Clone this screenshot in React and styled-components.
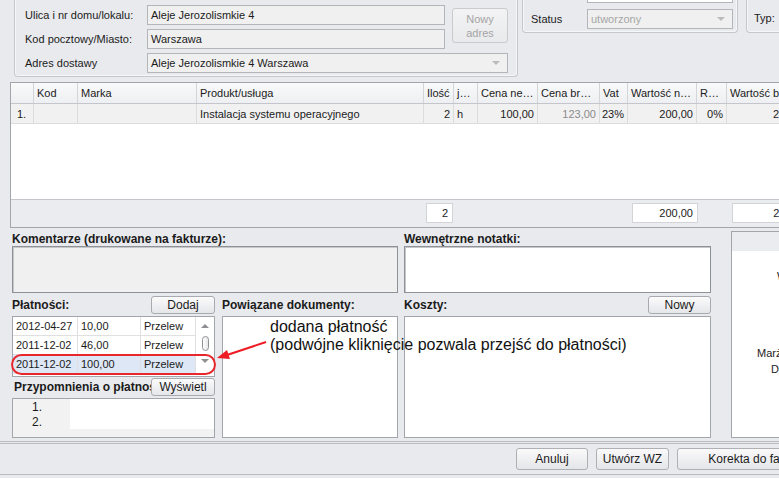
import React from "react";
import styled, { createGlobalStyle } from "styled-components";

const GlobalStyle = createGlobalStyle`
  html, body { margin: 0; padding: 0; background: #e9eaee; }
  body { font-family: "Liberation Sans", Arial, sans-serif; font-size: 11px; color: #1b1b1b; }
  * { box-sizing: border-box; }
`;

const Viewport = styled.div`
  width: 779px;
  height: 478px;
  overflow: hidden;
  background: #e9eaee;
`;

const Form = styled.div`
  width: 880px;
  display: flex;
  flex-direction: column;
`;

/* ---------- top ---------- */
const TopRow = styled.div`
  display: flex;
  align-items: flex-start;
  height: 80px;
`;

const GroupBox = styled.div`
  border: 1px solid #c5c7cd;
  border-top: none;
  border-radius: 0 0 4px 4px;
  box-shadow: inset 1px 0 0 #f6f7f9, inset -1px -1px 0 #f6f7f9;
`;

const AddressGroup = styled(GroupBox)`
  margin-left: 14px;
  width: 504px;
  height: 77px;
  padding: 5px 9px 0 10px;
  display: grid;
  grid-template-columns: 115px 298px 56px;
  grid-template-rows: 20px 20px 20px;
  column-gap: 7px;
  row-gap: 4px;
`;

const StatusGroup = styled(GroupBox)`
  margin-left: 4px;
  width: 216px;
  height: 33px;
  padding: 0 4px 0 8px;
  display: grid;
  grid-template-columns: 56px 1fr;
  grid-template-rows: 3px 20px;
  row-gap: 6px;
`;

const TypGroup = styled(GroupBox)`
  margin-left: 8px;
  flex: 1;
  height: 33px;
  padding: 3px 0 0 7px;
  display: flex;
  align-items: center;
  border-right: none;
`;

const FieldLabel = styled.div`
  display: flex;
  align-items: center;
  white-space: nowrap;
`;

const Field = styled.div`
  display: flex;
  align-items: center;
  justify-content: space-between;
  height: 20px;
  padding: 0 3px 0 3px;
  background: ${(p) => (p.$white ? "#ffffff" : "#f0f0f0")};
  border: 1px solid #b3b5ba;
  color: ${(p) => (p.$muted ? "#a6a6a6" : "#1b1b1b")};
  grid-column: ${(p) => p.$span || "auto"};
  white-space: nowrap;
`;

const StubField = styled.div`
  grid-column: 2;
  background: #ffffff;
  border: 1px solid #b3b5ba;
  border-top: none;
`;

const DropArrow = styled.span`
  width: 0;
  height: 0;
  margin-right: 4px;
  border-left: 4px solid transparent;
  border-right: 4px solid transparent;
  border-top: 4px solid #b9bbbf;
`;

const NewAddressButton = styled.div`
  grid-column: 3;
  grid-row: 1 / 3;
  align-self: start;
  margin-top: 3px;
  height: 35px;
  display: flex;
  align-items: center;
  justify-content: center;
  text-align: center;
  line-height: 14px;
  color: #a4a4a6;
  border: 1px solid #cacbcf;
  border-radius: 3px;
  background: linear-gradient(#f3f3f4, #e9eaec);
`;

/* ---------- data grid ---------- */
const COLS = "23px 44px 119px 227px 30px 24px 60px 62px 28px 69px 30px 1fr";

const DataGrid = styled.div`
  margin: 2px 0 0 10px;
  width: 860px;
  height: 146px;
  border: 1px solid #a2a5ac;
  background: #ffffff;
  display: flex;
  flex-direction: column;
`;

const HeaderRow = styled.div`
  display: grid;
  grid-template-columns: ${COLS};
  height: 21px;
  background: linear-gradient(#f9f9fa, #eeeff2);
  border-bottom: 1px solid #c4c6cb;
`;

const HeaderCell = styled.div`
  display: flex;
  align-items: center;
  padding: 0 3px;
  border-right: 1px solid #d3d5d9;
  white-space: nowrap;
  overflow: hidden;
`;

const DataRow = styled.div`
  display: grid;
  grid-template-columns: ${COLS};
  height: 20px;
  background: #f1f1f2;
`;

const DataCell = styled.div`
  display: flex;
  align-items: center;
  justify-content: ${(p) => (p.$right ? "flex-end" : "flex-start")};
  padding: 0 3px 0 ${(p) => p.$pl || 3}px;
  border-right: 1px solid #dcdcdc;
  border-bottom: 1px solid #dcdcdc;
  color: ${(p) => (p.$muted ? "#8a8a8a" : "#1b1b1b")};
  white-space: nowrap;
  overflow: hidden;
`;

const GridBody = styled.div`
  flex: 1;
`;

const FooterRow = styled.div`
  display: grid;
  grid-template-columns: ${COLS};
  height: 28px;
  padding-top: 3px;
  background: #ebecef;
  border-top: 1px solid #c4c6cb;
`;

const FooterBox = styled.div`
  grid-column: ${(p) => p.$col};
  margin-left: ${(p) => p.$ml}px;
  width: ${(p) => (p.$w ? `${p.$w}px` : "auto")};
  height: 20px;
  display: flex;
  align-items: center;
  justify-content: flex-end;
  padding-right: 4px;
  background: #ffffff;
  border: 1px solid #d2d4d8;
  white-space: nowrap;
`;

/* ---------- bottom section ---------- */
const Lower = styled.div`
  position: relative;
  margin-top: 3px;
  padding: 0 10px 0 12px;
  display: grid;
  grid-template-columns: 203px 7px 176px 6px 307px 20px 1fr;
  grid-template-rows: 15px 47px 23px 122px;
`;

const SectionTitle = styled.div`
  grid-column: ${(p) => p.$col};
  display: flex;
  align-items: center;
  font-weight: bold;
  font-size: 12px;
  white-space: nowrap;
`;

const TextArea = styled.div`
  grid-column: ${(p) => p.$col};
  background: ${(p) => (p.$white ? "#ffffff" : "#f0f0f0")};
  border: 1px solid #8e9197;
  box-shadow: inset 1px 1px 0 #c6c7c9;
`;

const Toolbar = styled.div`
  grid-column: ${(p) => p.$col};
  display: flex;
  align-items: center;
  justify-content: space-between;
`;

const ToolTitle = styled.div`
  font-weight: bold;
  font-size: 12px;
  white-space: nowrap;
  overflow: hidden;
  min-width: 0;
  flex: 1;
  padding-left: ${(p) => p.$pl || 0}px;
`;

const SmallButton = styled.div`
  flex: none;
  width: ${(p) => p.$w || 64}px;
  height: 18px;
  display: flex;
  align-items: center;
  justify-content: center;
  font-size: 12px;
  border: 1px solid #a8aab0;
  border-radius: 3px;
  background: linear-gradient(#fbfbfc, #e5e6e9);
`;

const ListBox = styled.div`
  grid-column: ${(p) => p.$col};
  background: #ffffff;
  border: 1px solid #a2a5ac;
`;

const LeftStack = styled.div`
  grid-column: 1;
  position: relative;
  display: flex;
  flex-direction: column;
`;

const PayList = styled.div`
  height: 61px;
  background: #ffffff;
  border: 1px solid #a2a5ac;
  display: flex;
`;

const PayRows = styled.div`
  display: grid;
  grid-template-columns: 65px 63px 55px;
  grid-auto-rows: 19px;
`;

const PayCell = styled.div`
  display: flex;
  align-items: center;
  padding: 0 3px;
  font-size: 11px;
  background: ${(p) => (p.$sel ? "#dee7f6" : "#ffffff")};
  border-right: 1px solid #e0e0e0;
  border-bottom: 1px solid #e0e0e0;
  white-space: nowrap;
`;

const ScrollBar = styled.div`
  flex: 1;
  display: flex;
  flex-direction: column;
  align-items: center;
  padding-top: 7px;
`;

const ScrollUp = styled.span`
  width: 0;
  height: 0;
  border-left: 4px solid transparent;
  border-right: 4px solid transparent;
  border-bottom: 4px solid #8d8f93;
`;

const ScrollDown = styled.span`
  width: 0;
  height: 0;
  margin-top: 8px;
  border-left: 4px solid transparent;
  border-right: 4px solid transparent;
  border-top: 4px solid #8d8f93;
`;

const Thumb = styled.span`
  width: 7px;
  height: 15px;
  margin-top: 8px;
  border: 1px solid #8d8f93;
  border-radius: 4px;
  background: linear-gradient(90deg, #ffffff, #e6e6e6);
`;

const Highlight = styled.div`
  position: absolute;
  left: -1px;
  top: 38px;
  width: 205px;
  height: 21px;
  border: 2px solid #e8262c;
  border-radius: 11px;
  pointer-events: none;
`;

const RemindHeader = styled.div`
  height: 19px;
  display: flex;
  align-items: center;
`;

const RemindBox = styled.div`
  margin-top: 2px;
  height: 40px;
  border: 1px solid #a2a5ac;
  background: #f2f2f2;
  display: grid;
  grid-template-columns: 57px 1fr;
  grid-template-rows: 15px 15px;
  align-content: start;
`;

const RemindNo = styled.div`
  display: flex;
  align-items: flex-end;
  padding-left: 19px;
  font-size: 12px;
`;

const RemindData = styled.div`
  background: #ffffff;
`;

const SidePanel = styled.div`
  grid-column: 7;
  grid-row: 1 / -1;
  background: #ffffff;
  border: 1px solid #a2a5ac;
  display: flex;
  flex-direction: column;
`;

const SideBand = styled.div`
  height: 19px;
  background: #ebecef;
`;

const SideLabel = styled.div`
  margin-top: ${(p) => p.$mt}px;
  padding-left: ${(p) => p.$pl}px;
  line-height: 13px;
  white-space: nowrap;
`;

const Callout = styled.div`
  position: absolute;
  left: 270px;
  top: 87px;
  font-family: "Liberation Sans", Arial, sans-serif;
  font-size: 16px;
  line-height: 18px;
  color: #111111;
  white-space: nowrap;
  pointer-events: none;
`;

const CalloutArrow = styled.svg`
  position: absolute;
  left: 214px;
  top: 108px;
  overflow: visible;
`;

/* ---------- bottom bar ---------- */
const BottomBar = styled.div`
  margin-top: 3px;
  border-top: 3px double #babcc1;
  border-bottom: 1px solid #babcc1;
  padding: 4px 43px 4px 0;
  display: flex;
  justify-content: flex-end;
  gap: 8px;
`;

const BarButton = styled.div`
  width: ${(p) => p.$w}px;
  height: 22px;
  display: flex;
  align-items: center;
  justify-content: center;
  font-size: 12px;
  border: 1px solid #aeb0b5;
  border-radius: 3px;
  background: linear-gradient(#fafafb, #e4e5e8);
  white-space: nowrap;
`;

const headers = ["", "Kod", "Marka", "Produkt/usługa", "Ilość", "j…", "Cena ne…", "Cena br…", "Vat", "Wartość n…", "R…", "Wartość brutto"];

const payments = [
  ["2012-04-27", "10,00", "Przelew"],
  ["2011-12-02", "46,00", "Przelew"],
  ["2011-12-02", "100,00", "Przelew"],
];

export default function App() {
  return (
    <Viewport>
      <GlobalStyle />
      <Form>
        <TopRow>
          <AddressGroup>
            <FieldLabel>Ulica i nr domu/lokalu:</FieldLabel>
            <Field>Aleje Jerozolismkie 4</Field>
            <NewAddressButton>Nowy<br />adres</NewAddressButton>
            <FieldLabel>Kod pocztowy/Miasto:</FieldLabel>
            <Field>Warszawa</Field>
            <FieldLabel>Adres dostawy</FieldLabel>
            <Field $span="2 / 4">
              Aleje Jerozolismkie 4 Warszawa
              <DropArrow />
            </Field>
          </AddressGroup>
          <StatusGroup>
            <StubField />
            <FieldLabel>Status</FieldLabel>
            <Field $muted>
              utworzony
              <DropArrow />
            </Field>
          </StatusGroup>
          <TypGroup>Typ:</TypGroup>
        </TopRow>

        <DataGrid>
          <HeaderRow>
            {headers.map((h, i) => (
              <HeaderCell key={i}>{h}</HeaderCell>
            ))}
          </HeaderRow>
          <DataRow>
            <DataCell $pl={6}>1.</DataCell>
            <DataCell />
            <DataCell />
            <DataCell>Instalacja systemu operacyjnego</DataCell>
            <DataCell $right>2</DataCell>
            <DataCell>h</DataCell>
            <DataCell $right>100,00</DataCell>
            <DataCell $right $muted>123,00</DataCell>
            <DataCell $right>23%</DataCell>
            <DataCell $right>200,00</DataCell>
            <DataCell $right>0%</DataCell>
            <DataCell $pl={46}>246,00</DataCell>
          </DataRow>
          <GridBody />
          <FooterRow>
            <FooterBox $col="5" $ml={2} $w={27}>2</FooterBox>
            <FooterBox $col="10" $ml={4} $w={66}>200,00</FooterBox>
            <FooterBox $col="12" $ml={5} $w={80}>246,00</FooterBox>
          </FooterRow>
        </DataGrid>

        <Lower>
          <SectionTitle $col="1 / 4">Komentarze (drukowane na fakturze):</SectionTitle>
          <SectionTitle $col="5">Wewnętrzne notatki:</SectionTitle>
          <SidePanel>
            <SideBand />
            <SideLabel $mt={19} $pl={45}>Wartość netto:</SideLabel>
            <SideLabel $mt={64} $pl={25}>Marża:</SideLabel>
            <SideLabel $mt={3} $pl={39}>Dochód:</SideLabel>
          </SidePanel>

          <TextArea $col="1 / 4" />
          <TextArea $col="5" $white />

          <Toolbar $col="1">
            <ToolTitle>Płatności:</ToolTitle>
            <SmallButton>Dodaj</SmallButton>
          </Toolbar>
          <Toolbar $col="3">
            <ToolTitle>Powiązane dokumenty:</ToolTitle>
          </Toolbar>
          <Toolbar $col="5">
            <ToolTitle>Koszty:</ToolTitle>
            <SmallButton $w={63}>Nowy</SmallButton>
          </Toolbar>

          <LeftStack>
            <PayList>
              <PayRows>
                {payments.map((r, i) =>
                  r.map((c, j) => (
                    <PayCell key={`${i}-${j}`} $sel={i === 2}>
                      {c}
                    </PayCell>
                  ))
                )}
              </PayRows>
              <ScrollBar>
                <ScrollUp />
                <Thumb />
                <ScrollDown />
              </ScrollBar>
            </PayList>
            <RemindHeader>
              <ToolTitle $pl={2}>Przypomnienia o płatnościach</ToolTitle>
              <SmallButton>Wyświetl</SmallButton>
            </RemindHeader>
            <RemindBox>
              <RemindNo>1.</RemindNo>
              <RemindData />
              <RemindNo>2.</RemindNo>
              <RemindData />
            </RemindBox>
            <Highlight />
          </LeftStack>
          <ListBox $col="3" />
          <ListBox $col="5" />

          <Callout>
            dodana płatność
            <br />
            (podwójne kliknięcie pozwala przejść do płatności)
          </Callout>
          <CalloutArrow width="56" height="24" viewBox="0 0 56 24">
            <line x1="52" y1="3" x2="10" y2="17" stroke="#ee1c25" strokeWidth="2" />
            <polygon points="3,19 13,11 16,20" fill="#ee1c25" />
          </CalloutArrow>
        </Lower>

        <BottomBar>
          <BarButton $w={72}>Anuluj</BarButton>
          <BarButton $w={73}>Utwórz WZ</BarButton>
          <BarButton $w={160}>Korekta do faktury</BarButton>
        </BottomBar>
      </Form>
    </Viewport>
  );
}
